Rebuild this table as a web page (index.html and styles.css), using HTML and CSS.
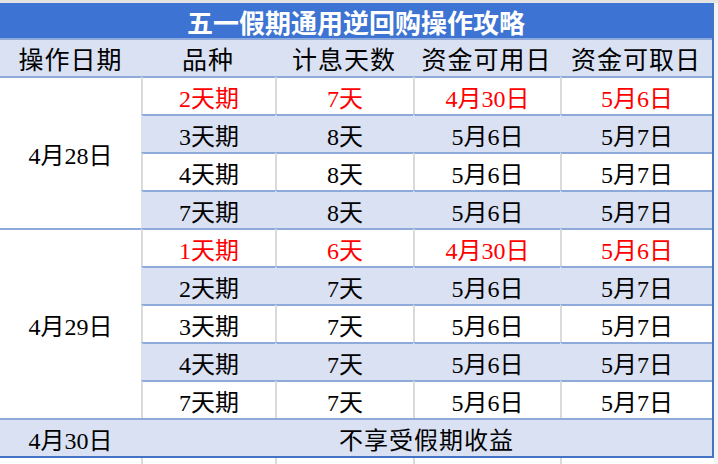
FILE: index.html
```html
<!DOCTYPE html>
<html lang="zh-CN">
<head>
<meta charset="utf-8">
<title>五一假期通用逆回购操作攻略</title>
<link rel="stylesheet" href="styles.css">
</head>
<body>
<div class="page">
  <div class="topband"></div>
  <div class="wrap">
    <div class="left">
      <div class="sheet">
        <div class="title">五一假期通用逆回购操作攻略</div>
        <div class="hd">操作日期</div>
        <div class="hd">品种</div>
        <div class="hd">计息天数</div>
        <div class="hd">资金可用日</div>
        <div class="hd">资金可取日</div>

        <div class="date span4">4月28日</div>
        <div class="c w red">2天期</div>
        <div class="c w red">7天</div>
        <div class="c w red">4月30日</div>
        <div class="c w red">5月6日</div>

        <div class="c b">3天期</div>
        <div class="c b">8天</div>
        <div class="c b">5月6日</div>
        <div class="c b">5月7日</div>

        <div class="c w">4天期</div>
        <div class="c w">8天</div>
        <div class="c w">5月6日</div>
        <div class="c w">5月7日</div>

        <div class="c b">7天期</div>
        <div class="c b">8天</div>
        <div class="c b">5月6日</div>
        <div class="c b">5月7日</div>

        <div class="date span5">4月29日</div>
        <div class="c w red">1天期</div>
        <div class="c w red">6天</div>
        <div class="c w red">4月30日</div>
        <div class="c w red">5月6日</div>

        <div class="c b">2天期</div>
        <div class="c b">7天</div>
        <div class="c b">5月6日</div>
        <div class="c b">5月7日</div>

        <div class="c w">3天期</div>
        <div class="c w">7天</div>
        <div class="c w">5月6日</div>
        <div class="c w">5月7日</div>

        <div class="c b">4天期</div>
        <div class="c b">7天</div>
        <div class="c b">5月6日</div>
        <div class="c b">5月7日</div>

        <div class="c w">7天期</div>
        <div class="c w">7天</div>
        <div class="c w">5月6日</div>
        <div class="c w">5月7日</div>

        <div class="last">4月30日</div>
        <div class="last merged">不享受假期收益</div>
      </div>
      <div class="below">
        <div class="g first"></div>
        <div class="g"></div>
        <div class="g"></div>
        <div class="g"></div>
        <div class="g"></div>
      </div>
    </div>
    <div class="edge"></div>
  </div>
</div>
</body>
</html>
```

FILE: styles.css
```css
html, body {
  margin: 0;
  padding: 0;
  background: #ffffff;
}

.page {
  width: 718px;
  height: 464px;
  overflow: hidden;
  font-family: "Liberation Serif", "Noto Sans CJK SC", serif;
  color: #000;
}

.topband {
  height: 3px;
  background: #e3e3e3;
}

.wrap {
  display: flex;
}

.left {
  width: 714px;
}

.edge {
  flex: 1;
  background: #f3f3f3;
}

.sheet {
  display: grid;
  grid-template-columns: 141px 134px 138px 147px 152px;
  grid-template-rows: 35px repeat(10, 38px) 40px;
  border-right: 2px solid #4472c4;
}

.sheet > div {
  box-sizing: border-box;
  display: flex;
  align-items: center;
  justify-content: center;
  white-space: nowrap;
}

.title {
  grid-column: 1 / -1;
  background: #3d73d2;
  color: #ffffff;
  font-family: "Noto Sans CJK SC", sans-serif;
  font-weight: 700;
  font-size: 26px;
  padding-top: 1px;
}

.hd {
  background: #d9e1f2;
  border-top: 2px solid #8eaadb;
  font-family: "Noto Sans CJK SC", sans-serif;
  font-size: 25px;
  letter-spacing: 1px;
}

.date {
  background: #ffffff;
  border-top: 2px solid #8eaadb;
  font-size: 24px;
}

.span4 { grid-row: span 4; }
.span5 { grid-row: span 5; }

.c {
  border-top: 2px solid #8eaadb;
  border-left: 2px solid transparent;
  font-size: 24px;
}

.c.w {
  background: #ffffff;
  border-left-color: #dadada;
}

.c.b {
  background: #d9e1f2;
}

.red {
  color: #ff0000;
}

.last {
  background: #d9e1f2;
  border-top: 2px solid #8eaadb;
  border-bottom: 2px solid #4472c4;
  font-size: 24px;
}

.merged {
  grid-column: 2 / 6;
  font-family: "Noto Sans CJK SC", sans-serif;
  letter-spacing: 1px;
}

.below {
  display: grid;
  grid-template-columns: 141px 134px 138px 147px 152px;
  height: 6px;
}

.g {
  border-left: 2px solid #dadada;
}

.g.first {
  border-left: none;
}
```
